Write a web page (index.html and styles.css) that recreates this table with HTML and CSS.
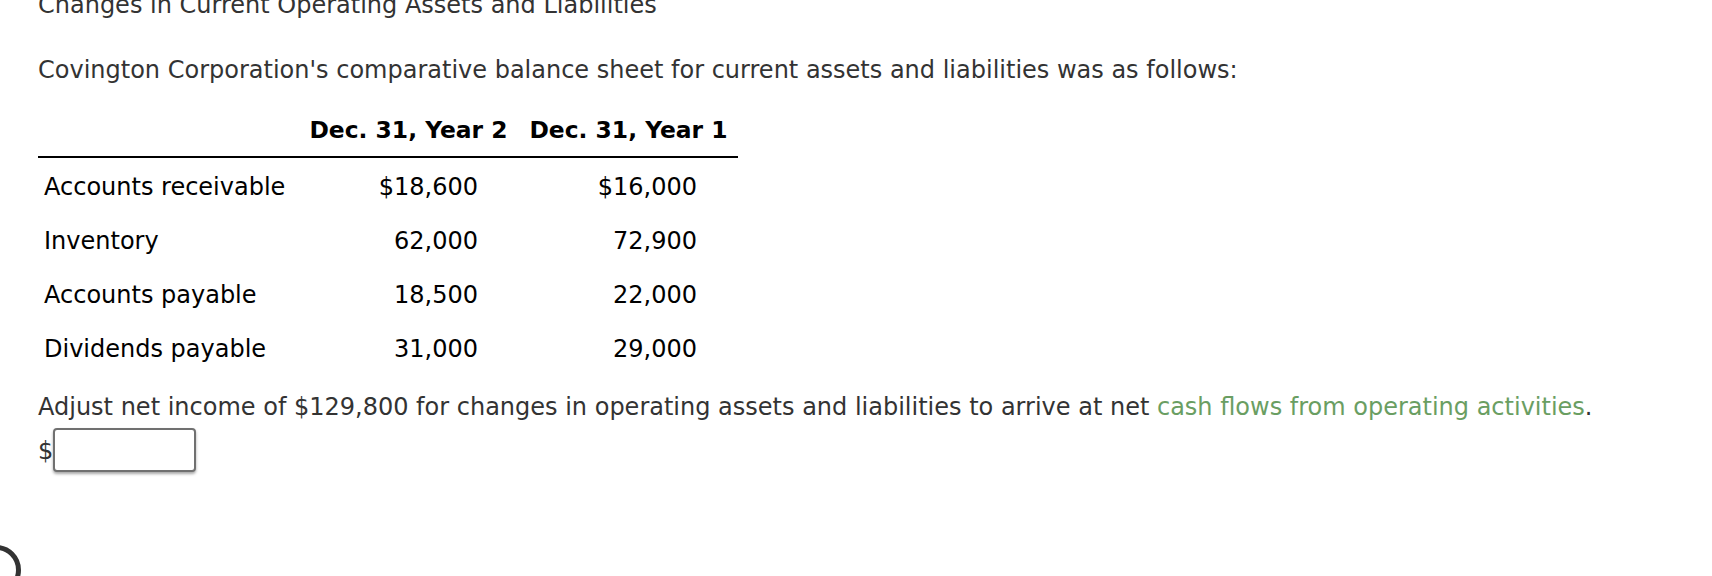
FILE: index.html
```html
<!DOCTYPE html>
<html>
<head>
<meta charset="utf-8">
<link rel="stylesheet" href="styles.css">
</head>
<body>
<div class="page">
  <p class="title">Changes in Current Operating Assets and Liabilities</p>
  <p class="intro">Covington Corporation's comparative balance sheet for current assets and liabilities was as follows:</p>
  <div class="sheet">
    <div class="hcell blank"></div>
    <div class="hcell">Dec. 31, Year 2</div>
    <div class="hcell">Dec. 31, Year 1</div>

    <div class="label">Accounts receivable</div>
    <div class="num">$18,600</div>
    <div class="num">$16,000</div>

    <div class="label">Inventory</div>
    <div class="num">62,000</div>
    <div class="num">72,900</div>

    <div class="label">Accounts payable</div>
    <div class="num">18,500</div>
    <div class="num">22,000</div>

    <div class="label">Dividends payable</div>
    <div class="num">31,000</div>
    <div class="num">29,000</div>
  </div>
  <p class="question">Adjust net income of $129,800 for changes in operating assets and liabilities to arrive at net <span class="term">cash flows from operating activities</span>.</p>
  <div class="answer"><span class="dollar">$</span><input class="field" type="text"></div>
</div>
<div class="help-ring"></div>
</body>
</html>
```
FILE: styles.css
```css
html, body {
  margin: 0;
  padding: 0;
  background: #ffffff;
  overflow: hidden;
}
body {
  width: 1712px;
  height: 576px;
  position: relative;
  font-family: "DejaVu Sans", Verdana, sans-serif;
  font-size: 24px;
  line-height: 28px;
  color: #333333;
}
.page {
  padding-left: 38px;
}
.title {
  margin: -9px 0 0 0;
}
.intro {
  margin: 37px 0 0 0;
}
.sheet {
  margin-top: 32px;
  width: 700px;
  display: grid;
  grid-template-columns: 260px 221px 219px;
  color: #000000;
}
.hcell {
  font-weight: bold;
  font-size: 23.4px;
  text-align: center;
  padding-bottom: 12px;
  border-bottom: 2px solid #000000;
  white-space: nowrap;
}
.label {
  padding: 15px 0 11px 6px;
  white-space: nowrap;
}
.num {
  padding: 15px 41px 11px 0;
  text-align: right;
}
.question {
  margin: 19px 0 0 0;
}
.term {
  color: #6a9e62;
}
.answer {
  margin-top: 7px;
  display: flex;
  align-items: flex-end;
}
.dollar {
  line-height: 28px;
  margin-bottom: 7px;
}
.field {
  box-sizing: border-box;
  width: 143px;
  height: 44px;
  margin: 0;
  border: 2px solid #707070;
  border-radius: 4px;
  box-shadow: 0 2px 3px rgba(0, 0, 0, 0.35);
  background: #ffffff;
  font-family: "DejaVu Sans", Verdana, sans-serif;
  font-size: 20px;
}
.help-ring {
  position: absolute;
  left: -29px;
  top: 545px;
  width: 40px;
  height: 40px;
  border: 5px solid #333333;
  border-radius: 50%;
}
```
